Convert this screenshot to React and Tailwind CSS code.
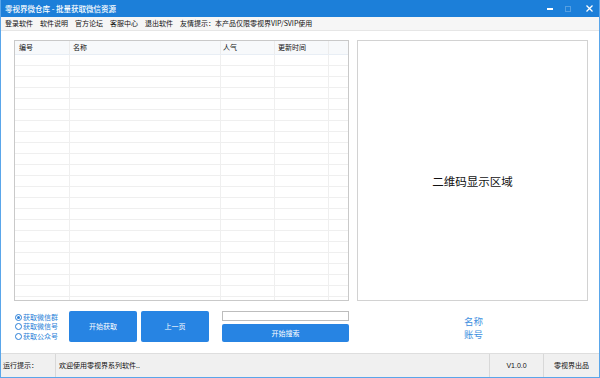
import React from "react";

const font = { fontFamily: '"Noto Sans CJK SC", "Noto Sans", sans-serif' };

export default function App() {
  const rows = Array.from({ length: 22 });
  return (
    <div
      className="w-[600px] h-[378px] bg-white flex flex-col border-x border-b border-[#5aa6ea] overflow-hidden"
      style={font}
    >
      {/* Title bar */}
      <div className="h-[17px] shrink-0 bg-[#1c7fd9] flex items-center justify-between pl-[4px] pr-[6px]">
        <span className="text-white text-[7.5px] leading-none font-medium">零视界微仓库 - 批量获取微信资源</span>
        <div className="flex items-center gap-[12px]">
          <div className="w-[6px] h-[1.5px] bg-white mt-[1px]" />
          <div className="w-[6px] h-[6px] border border-white/25" />
          <svg width="7" height="7" viewBox="0 0 7 7" className="ml-[3px]">
            <path d="M0.5 0.5 L6.5 6.5 M6.5 0.5 L0.5 6.5" stroke="white" strokeWidth="1.3" />
          </svg>
        </div>
      </div>
      {/* Menu bar */}
      <div className="h-[14px] shrink-0 bg-[#f6f6f6] border-b border-[#e6e6e6] flex items-center gap-[7px] pl-[4px] text-[7px] leading-none text-[#111]">
        <span>登录软件</span>
        <span>软件说明</span>
        <span>官方论坛</span>
        <span>客服中心</span>
        <span>退出软件</span>
        <span>友情提示：本产品仅限零视界VIP/SVIP使用</span>
      </div>

      {/* Main */}
      <div className="flex-1 flex flex-col pt-[9px] pl-[13px] pr-[10px]">
        <div className="flex gap-[8px]">
          {/* Table */}
          <div className="w-[335px] h-[261px] border border-[#c9c9c9] flex flex-col overflow-hidden">
            <div className="h-[14px] shrink-0 flex bg-[#f7f9fb] border-b border-[#e8eef5] text-[7px] leading-none text-[#111]">
              <div className="w-[55px] border-r border-[#ececec] flex items-center pl-[4px]">编号</div>
              <div className="w-[151px] border-r border-[#ececec] flex items-center pl-[3px]">名称</div>
              <div className="w-[54px] border-r border-[#ececec] flex items-center pl-[2px]">人气</div>
              <div className="w-[54px] border-r border-[#ececec] flex items-center pl-[3px]">更新时间</div>
              <div className="flex-1" />
            </div>
            {rows.map((_, i) => (
              <div key={i} className="h-[11px] shrink-0 flex border-b border-[#efefef]">
                <div className="w-[55px] border-r border-[#efefef]" />
                <div className="w-[151px] border-r border-[#efefef]" />
                <div className="w-[54px] border-r border-[#efefef]" />
                <div className="w-[54px] border-r border-[#efefef]" />
                <div className="flex-1" />
              </div>
            ))}
            <div className="flex-1 flex">
              <div className="w-[55px] border-r border-[#efefef]" />
              <div className="w-[151px] border-r border-[#efefef]" />
              <div className="w-[54px] border-r border-[#efefef]" />
              <div className="w-[54px] border-r border-[#efefef]" />
              <div className="flex-1" />
            </div>
          </div>
          {/* QR area */}
          <div className="w-[231px] h-[261px] border border-[#d2d2d2] flex items-center justify-center pt-[22px]">
            <span className="text-[11.5px] leading-none text-[#111]">二维码显示区域</span>
          </div>
        </div>

        {/* Controls */}
        <div className="flex mt-[10px] h-[31px]">
          <div className="w-[55px] flex flex-col justify-center gap-[2.5px] pl-[1px] text-[7px] leading-none text-[#2a7fd8]">
            <div className="flex items-center gap-[1px]">
              <div className="w-[7px] h-[7px] rounded-full border border-[#2a7fd8] flex items-center justify-center">
                <div className="w-[3px] h-[3px] rounded-full bg-[#2a7fd8]" />
              </div>
              <span>获取微信群</span>
            </div>
            <div className="flex items-center gap-[1px]">
              <div className="w-[7px] h-[7px] rounded-full border border-[#2a7fd8]" />
              <span>获取微信号</span>
            </div>
            <div className="flex items-center gap-[1px]">
              <div className="w-[7px] h-[7px] rounded-full border border-[#2a7fd8]" />
              <span>获取公众号</span>
            </div>
          </div>
          <button className="w-[68px] h-[31px] bg-[#2784e3] rounded-[2px] text-white text-[7px] leading-none flex items-center justify-center">
            开始获取
          </button>
          <button className="ml-[4px] w-[68px] h-[31px] bg-[#2784e3] rounded-[2px] text-white text-[7px] leading-none flex items-center justify-center">
            上一页
          </button>
          <div className="ml-[13px] w-[127px] flex flex-col">
            <div className="h-[10px] border border-[#bdbdbd] bg-white" />
            <button className="mt-[3px] h-[18px] bg-[#2784e3] rounded-[2px] text-white text-[7px] leading-none flex items-center justify-center">
              开始搜索
            </button>
          </div>
          <div className="ml-[9px] w-[231px] flex flex-col items-center justify-center gap-[3px] pt-[3px] text-[9.5px] leading-none text-[#3d8fe0]">
            <span>名称</span>
            <span>账号</span>
          </div>
        </div>
      </div>

      {/* Status bar */}
      <div className="h-[24px] shrink-0 bg-[#f0f0f0] border-t border-[#dedede] flex text-[7px] leading-none text-[#111]">
        <div className="w-[55px] border-r border-[#d8d8d8] flex items-center pl-[2px]">运行提示：</div>
        <div className="flex-1 border-r border-[#d8d8d8] flex items-center pl-[3px]">欢迎使用零视界系列软件..</div>
        <div className="w-[54px] border-r border-[#d8d8d8] flex items-center justify-center" style={{ fontFamily: '"Liberation Sans", sans-serif' }}>
          V1.0.0
        </div>
        <div className="w-[55px] flex items-center justify-center">零视界出品</div>
      </div>
    </div>
  );
}
